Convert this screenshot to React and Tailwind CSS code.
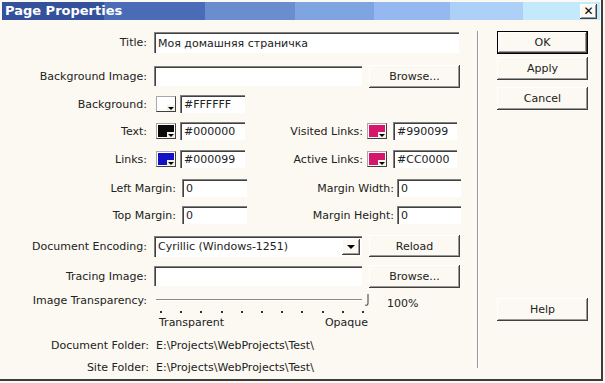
import React from 'react'

const sunken = "bg-white border-t border-l border-[#808080] shadow-[inset_1px_1px_#404040] flex items-center pl-[3px]"
const raised = "flex items-center justify-center bg-[#fbf9f1] shadow-[inset_-1px_-1px_#404040,inset_1px_1px_#ffffff,inset_-2px_-2px_#9a9a9a]"

function Swatch({ color }) {
    return (
        <div className="relative w-[20px] h-[16px] border-t border-l border-[#a8a8a8] border-b border-r border-b-[#404040] border-r-[#404040] bg-white">
            <div className={`absolute left-[1px] top-[1px] right-[1px] bottom-[1px] ${color}`}></div>
            <div className="absolute right-0 bottom-0 w-[8px] h-[6px] bg-[#f4f2ea] flex items-center justify-center">
                <div className="w-0 h-0 border-l-[3px] border-r-[3px] border-t-[3px] border-l-transparent border-r-transparent border-t-black"></div>
            </div>
        </div>
    )
}

function Label({ w, children }) {
    return <span className={`${w} text-right shrink-0 whitespace-nowrap`}>{children}</span>
}

function App() {
    return (
        <div className="w-[605px] h-[383px] bg-[#fbf9f1] font-['DejaVu_Sans',sans-serif] text-[11px] leading-[13px] text-[#222] overflow-hidden">
            <div className="w-[603px] h-[381px] border-r-2 border-b-2 border-[#3c3c3c] pt-[2px] pl-[2px] flex flex-col">
                {/* title bar */}
                <div className="h-[18px] w-[598px] flex items-center justify-between pl-[3px] pr-[3px] bg-[linear-gradient(to_right,#34519c_0px,#34519c_102px,#4a6bb7_102px,#4a6bb7_203px,#6a8dcf_203px,#6a8dcf_293px,#7fa4e2_293px,#7fa4e2_372px,#96b8f0_372px,#96b8f0_448px,#add0f8_448px,#add0f8_521px,#c4e9fc_521px)]">
                    <span className="text-white font-bold text-[13px] leading-[14px]">Page Properties</span>
                    <div className={`${raised} w-[17px] h-[15px] bg-[#f2f4f6]`}>
                        <span className="font-bold text-[12px] leading-[12px] text-black">✕</span>
                    </div>
                </div>

                <div className="flex">
                    {/* form */}
                    <div className="w-[470px] flex flex-col pt-[12px]">
                        <div className="flex items-center h-[21px]">
                            <Label w="w-[145px]">Title:</Label>
                            <div className={`${sunken} ml-[7px] w-[305px] h-[21px]`}>Моя домашняя страничка</div>
                        </div>

                        <div className="flex items-center h-[24px] mt-[11px]">
                            <Label w="w-[145px]">Background Image:</Label>
                            <div className={`${sunken} ml-[7px] w-[208px] h-[20px]`}></div>
                            <div className={`${raised} ml-[7px] w-[91px] h-[23px]`}>Browse...</div>
                        </div>

                        <div className="flex items-center h-[18px] mt-[7px]">
                            <Label w="w-[145px]">Background:</Label>
                            <div className="ml-[9px]"><Swatch color="bg-white" /></div>
                            <div className={`${sunken} ml-[4px] w-[65px] h-[18px]`}>#FFFFFF</div>
                        </div>

                        <div className="flex items-center h-[18px] mt-[9px]">
                            <Label w="w-[145px]">Text:</Label>
                            <div className="ml-[9px]"><Swatch color="bg-[#0a0a0a]" /></div>
                            <div className={`${sunken} ml-[4px] w-[65px] h-[18px]`}>#000000</div>
                            <Label w="w-[118px]">Visited Links:</Label>
                            <div className="ml-[4px]"><Swatch color="bg-[#d5166b]" /></div>
                            <div className={`${sunken} ml-[6px] w-[64px] h-[18px]`}>#990099</div>
                        </div>

                        <div className="flex items-center h-[18px] mt-[10px]">
                            <Label w="w-[145px]">Links:</Label>
                            <div className="ml-[9px]"><Swatch color="bg-[#1212c4]" /></div>
                            <div className={`${sunken} ml-[4px] w-[65px] h-[18px]`}>#000099</div>
                            <Label w="w-[118px]">Active Links:</Label>
                            <div className="ml-[4px]"><Swatch color="bg-[#d5166b]" /></div>
                            <div className={`${sunken} ml-[6px] w-[64px] h-[18px]`}>#CC0000</div>
                        </div>

                        <div className="flex items-center h-[18px] mt-[11px]">
                            <Label w="w-[174px]">Left Margin:</Label>
                            <div className={`${sunken} ml-[6px] w-[65px] h-[18px]`}>0</div>
                            <Label w="w-[147px]">Margin Width:</Label>
                            <div className={`${sunken} ml-[3px] w-[64px] h-[18px]`}>0</div>
                        </div>

                        <div className="flex items-center h-[18px] mt-[9px]">
                            <Label w="w-[174px]">Top Margin:</Label>
                            <div className={`${sunken} ml-[6px] w-[65px] h-[18px]`}>0</div>
                            <Label w="w-[147px]">Margin Height:</Label>
                            <div className={`${sunken} ml-[3px] w-[64px] h-[18px]`}>0</div>
                        </div>

                        <div className="flex items-center h-[22px] mt-[11px]">
                            <Label w="w-[145px]">Document Encoding:</Label>
                            <div className={`${sunken} ml-[7px] w-[208px] h-[21px] justify-between pr-[2px]`}>
                                <span>Cyrillic (Windows-1251)</span>
                                <div className={`${raised} w-[18px] h-[16px]`}>
                                    <div className="w-0 h-0 border-l-[4px] border-r-[4px] border-t-[4px] border-l-transparent border-r-transparent border-t-black"></div>
                                </div>
                            </div>
                            <div className={`${raised} ml-[7px] w-[91px] h-[22px]`}>Reload</div>
                        </div>

                        <div className="flex items-center h-[24px] mt-[7px]">
                            <Label w="w-[145px]">Tracing Image:</Label>
                            <div className={`${sunken} ml-[7px] w-[208px] h-[20px]`}></div>
                            <div className={`${raised} ml-[7px] w-[91px] h-[23px]`}>Browse...</div>
                        </div>

                        <div className="flex items-center h-[16px] mt-[4px]">
                            <Label w="w-[145px]">Image Transparency:</Label>
                            <div className="ml-[9px] w-[206px] h-[2px] bg-[#8a8a8a] border-b border-white"></div>
                            <svg width="7" height="14" viewBox="0 0 7 14" className="ml-[1px]">
                                <path d="M5 1 L5 10 Q5 13 2 12" fill="none" stroke="#555" strokeWidth="1.2" />
                            </svg>
                            <span className="ml-[17px] mt-[6px]">100%</span>
                        </div>

                        <div className="flex justify-between w-[204px] ml-[158px] mt-[3px] h-[3px]">
                            {Array.from({ length: 11 }).map((_, i) => (
                                <div key={i} className="w-[2px] h-[2px] bg-[#333]"></div>
                            ))}
                        </div>

                        <div className="flex justify-between w-[209px] ml-[157px] mt-[1px] h-[14px] items-center">
                            <span>Transparent</span>
                            <span>Opaque</span>
                        </div>

                        <div className="flex items-center h-[14px] mt-[9px]">
                            <Label w="w-[147px]">Document Folder:</Label>
                            <span className="ml-[7px]">E:\Projects\WebProjects\Test\</span>
                        </div>

                        <div className="flex items-center h-[14px] mt-[8px]">
                            <Label w="w-[147px]">Site Folder:</Label>
                            <span className="ml-[7px]">E:\Projects\WebProjects\Test\</span>
                        </div>
                    </div>

                    {/* separator */}
                    <div className="ml-[5px] mt-[11px] w-[2px] h-[337px] border-l border-[#9a9a9a] border-r border-r-white"></div>

                    {/* buttons */}
                    <div className="ml-[18px] flex flex-col pt-[11px]">
                        <div className={`${raised} w-[91px] h-[23px] border border-black`}>OK</div>
                        <div className={`${raised} w-[91px] h-[23px] mt-[3px]`}>Apply</div>
                        <div className={`${raised} w-[91px] h-[23px] mt-[7px]`}>Cancel</div>
                        <div className={`${raised} w-[91px] h-[23px] mt-[188px]`}>Help</div>
                    </div>
                </div>
            </div>
        </div>
    )
}

export default App
